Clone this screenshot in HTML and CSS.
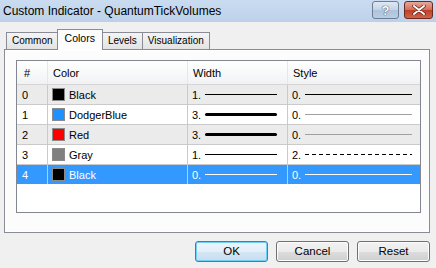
FILE: index.html
```html
<!DOCTYPE html>
<html>
    <head>
        <meta charset="utf-8">
        <title>Custom Indicator</title>
        <link rel="stylesheet" href="styles.css">
    </head>
    <body>
        <div class="titlebar">
            <div class="title">Custom Indicator - QuantumTickVolumes</div>
            <div class="tbtn help">?</div>
            <div class="tbtn close">
                <svg width="14" height="10" viewBox="0 0 14 10">
                    <path d="M2 1 L12 9 M12 1 L2 9" stroke="#5a1e14" stroke-width="3.4" stroke-linecap="round"/>
                    <path d="M2 1 L12 9 M12 1 L2 9" stroke="#fff" stroke-width="2" stroke-linecap="round"/>
                </svg>
            </div>
        </div>
        <div class="content">
            <div class="tabs">
                <div class="tab">Common</div>
                <div class="tab active">Colors</div>
                <div class="tab">Levels</div>
                <div class="tab">Visualization</div>
            </div>
            <div class="panel">
                <div class="list">
                    <div class="row head">
                        <div class="cell num">#</div>
                        <div class="cell">Color</div>
                        <div class="cell">Width</div>
                        <div class="cell">Style</div>
                    </div>
                    <div class="row gray">
                        <div class="cell num">0</div>
                        <div class="cell"><span class="swatch" style="background:#000"></span>Black</div>
                        <div class="cell">1.<span class="ln"></span></div>
                        <div class="cell style">0.<span class="ln"></span></div>
                    </div>
                    <div class="row">
                        <div class="cell num">1</div>
                        <div class="cell"><span class="swatch" style="background:#1e90ff"></span>DodgerBlue</div>
                        <div class="cell">3.<span class="ln thick"></span></div>
                        <div class="cell style">0.<span class="ln dim"></span></div>
                    </div>
                    <div class="row gray">
                        <div class="cell num">2</div>
                        <div class="cell"><span class="swatch" style="background:#ff0000"></span>Red</div>
                        <div class="cell">3.<span class="ln thick"></span></div>
                        <div class="cell style">0.<span class="ln dim"></span></div>
                    </div>
                    <div class="row">
                        <div class="cell num">3</div>
                        <div class="cell"><span class="swatch" style="background:#808080"></span>Gray</div>
                        <div class="cell">1.<span class="ln"></span></div>
                        <div class="cell style">2.<span class="ln dash"></span></div>
                    </div>
                    <div class="row selected">
                        <div class="cell num">4</div>
                        <div class="cell"><span class="swatch" style="background:#000"></span>Black</div>
                        <div class="cell">0.<span class="ln"></span></div>
                        <div class="cell style">0.<span class="ln"></span></div>
                    </div>
                </div>
            </div>
            <div class="buttons">
                <div class="btn default">OK</div>
                <div class="btn">Cancel</div>
                <div class="btn">Reset</div>
            </div>
        </div>
    </body>
</html>
```

FILE: styles.css
```css
body {
    margin:0;
    width:436px;
    height:268px;
    overflow:hidden;
    background:#f0f0f0;
    font-family:"Liberation Sans", Arial, sans-serif;
    font-size:11px;
    color:#000;
}
.titlebar {
    height:22px;
    display:flex;
    align-items:center;
    padding:0 3px 0 3px;
    background:linear-gradient(#cadcf0, #bcd1e9);
}
.title {
    flex:1;
    font-size:12px;
}
.tbtn {
    width:25px;
    height:16px;
    margin-top:-2px;
    border:1px solid #6d7d92;
    border-radius:3px;
    display:flex;
    align-items:center;
    justify-content:center;
    box-sizing:content-box;
}
.help {
    margin-right:5px;
    background:linear-gradient(#dfe8f3 0%, #c3d3e6 50%, #aec3dc 51%, #b9cde4 100%);
    color:#fff;
    font-weight:bold;
    font-size:13px;
    text-shadow:0 0 1px #2d3e55, 0 0 1px #2d3e55;
}
.close {
    width:27px;
    border-color:#6a2a22;
    background:linear-gradient(#e7a79a 0%, #d26b56 50%, #bf3f26 51%, #d06346 100%);
}
.content {
    padding:7px 6px 0 4px;
}
.tabs {
    display:flex;
    align-items:flex-end;
    height:20px;
    padding-left:2px;
}
.tab {
    height:16px;
    line-height:16px;
    padding:0 5px;
    margin-right:-1px;
    font-size:10px;
    border:1px solid #898c95;
    border-bottom:0;
    background:linear-gradient(#f4f4f4, #e3e3e3);
}
.tab.active {
    position:relative;
    z-index:1;
    height:20px;
    line-height:17px;
    margin:0 -1px -1px -1px;
    padding:0 7px;
    font-size:10.5px;
    background:#fcfcfc;
}
.panel {
    height:172px;
    padding:10px 8px 0 11px;
    border:1px solid #898c95;
    background:#fcfcfc;
    box-shadow:inset 1px 1px #fff, inset -1px -1px #fff;
}
.list {
    height:151px;
    border:1px solid #828790;
    background:#fff;
}
.row {
    display:grid;
    grid-template-columns:31px 140px 100px 1fr;
    height:19px;
    border-bottom:1px solid #cacaca;
}
.row.head {
    height:23px;
    background:linear-gradient(#ffffff, #f1f2f4);
    border-bottom:1px solid #d5d5d5;
}
.row.gray {
    background:#ebebeb;
}
.row.selected {
    background:#3399ff;
    color:#fff;
    border-bottom:0;
}
.cell {
    display:flex;
    align-items:center;
    padding:0 10px 0 4px;
    border-right:1px solid #cacaca;
    white-space:nowrap;
}
.head .cell {
    padding-left:5px;
    border-right:1px solid #e6e7e9;
}
.cell.num {
    padding-left:5px;
}
.head .cell.num {
    padding-left:7px;
}
.cell:last-child {
    border-right:0;
}
.cell.style {
    padding-right:8px;
}
.swatch {
    width:11px;
    height:11px;
    margin-right:4px;
    border:1px solid #8a8a8a;
}
.ln {
    flex:1;
    height:1px;
    margin-left:4px;
    background:#000;
}
.ln.thick {
    height:3px;
    border-radius:2px;
}
.ln.dim {
    background:#a0a0a0;
}
.ln.dash {
    background:repeating-linear-gradient(90deg, #000 0 4px, transparent 4px 7px);
}
.selected .ln {
    background:#fff;
}
.buttons {
    display:flex;
    justify-content:flex-end;
    gap:8px;
    margin-top:8px;
}
.btn {
    width:71px;
    height:19px;
    line-height:19px;
    text-align:center;
    font-size:11.5px;
    border:1px solid #707070;
    border-radius:3px;
    background:linear-gradient(#f2f2f2 0%, #ebebeb 50%, #dddddd 51%, #cfcfcf 100%);
    box-shadow:inset 0 0 0 1px #fcfcfc;
}
.btn.default {
    border-color:#3c7fb1;
    background:linear-gradient(#eef5fb 0%, #e2eef8 50%, #d3e6f4 51%, #c6ddf0 100%);
    box-shadow:inset 0 0 0 1px #72d0f6;
}
```
